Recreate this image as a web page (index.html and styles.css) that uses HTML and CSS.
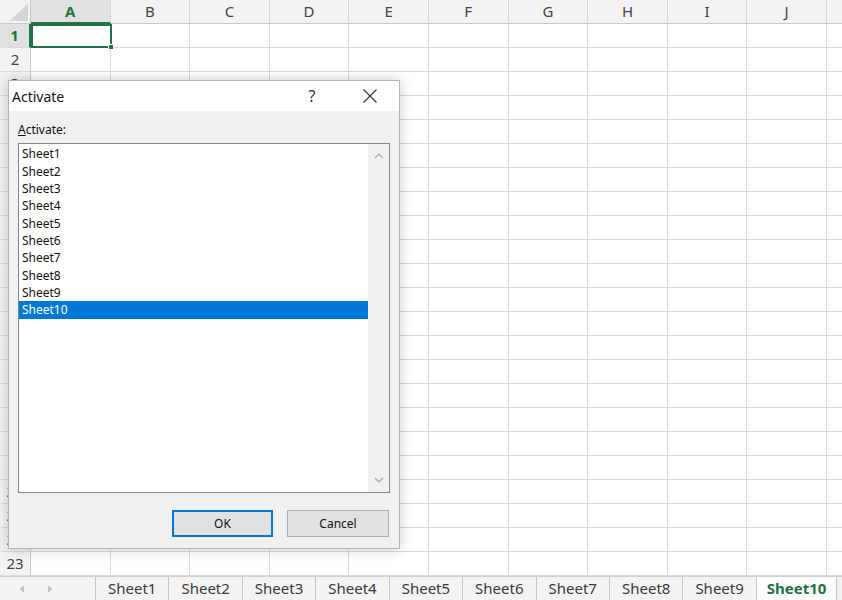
FILE: index.html
```html
<!DOCTYPE html>
<html>
<head>
<meta charset="utf-8">
<link rel="stylesheet" href="styles.css">
</head>
<body>
<div class="app">
  <div class="sheet">
    <div class="corner"><span class="tri"></span></div>
    <div class="colheads">
      <div class="ch sel">A</div>
      <div class="ch">B</div>
      <div class="ch">C</div>
      <div class="ch">D</div>
      <div class="ch">E</div>
      <div class="ch">F</div>
      <div class="ch">G</div>
      <div class="ch">H</div>
      <div class="ch">I</div>
      <div class="ch">J</div>
      <div class="ch"></div>
    </div>
    <div class="rowheads">
      <div class="rh sel">1</div>
      <div class="rh">2</div>
      <div class="rh">3</div>
      <div class="rh">4</div>
      <div class="rh">5</div>
      <div class="rh">6</div>
      <div class="rh">7</div>
      <div class="rh">8</div>
      <div class="rh">9</div>
      <div class="rh">10</div>
      <div class="rh">11</div>
      <div class="rh">12</div>
      <div class="rh">13</div>
      <div class="rh">14</div>
      <div class="rh">15</div>
      <div class="rh">16</div>
      <div class="rh">17</div>
      <div class="rh">18</div>
      <div class="rh">19</div>
      <div class="rh">20</div>
      <div class="rh">21</div>
      <div class="rh">22</div>
      <div class="rh">23</div>
    </div>
    <div class="cells">
      <div class="cursor"><span class="handle"></span></div>
    </div>
  </div>
  <div class="tabbar">
    <div class="nav">
      <svg class="arrow" width="6" height="10" viewBox="0 0 6 10"><path d="M5 1 L1 5 L5 9 Z" fill="#c3c3c3"/></svg>
      <svg class="arrow" width="6" height="10" viewBox="0 0 6 10"><path d="M1 1 L5 5 L1 9 Z" fill="#c3c3c3"/></svg>
    </div>
    <div class="tab">Sheet1</div>
    <div class="tab">Sheet2</div>
    <div class="tab">Sheet3</div>
    <div class="tab">Sheet4</div>
    <div class="tab">Sheet5</div>
    <div class="tab">Sheet6</div>
    <div class="tab">Sheet7</div>
    <div class="tab">Sheet8</div>
    <div class="tab">Sheet9</div>
    <div class="tab active">Sheet10</div>
  </div>

  <div class="dialog">
    <div class="titlebar">
      <div class="title">Activate</div>
      <div class="tbtns">
        <span class="help">?</span>
        <span class="close">
          <svg width="14" height="14" viewBox="0 0 14 14"><path d="M0.5 0.5 L13.5 13.5 M13.5 0.5 L0.5 13.5" stroke="#333" stroke-width="1.1" fill="none"/></svg>
        </span>
      </div>
    </div>
    <div class="dbody">
      <div class="label"><u>A</u>ctivate:</div>
      <div class="listbox">
        <div class="items">
          <div class="item">Sheet1</div>
          <div class="item">Sheet2</div>
          <div class="item">Sheet3</div>
          <div class="item">Sheet4</div>
          <div class="item">Sheet5</div>
          <div class="item">Sheet6</div>
          <div class="item">Sheet7</div>
          <div class="item">Sheet8</div>
          <div class="item">Sheet9</div>
          <div class="item selected">Sheet10</div>
        </div>
        <div class="vscroll">
          <svg width="10" height="6" viewBox="0 0 10 6"><path d="M1 5 L5 1 L9 5" stroke="#a6a6a6" stroke-width="1.2" fill="none"/></svg>
          <svg width="10" height="6" viewBox="0 0 10 6"><path d="M1 1 L5 5 L9 1" stroke="#a6a6a6" stroke-width="1.2" fill="none"/></svg>
        </div>
      </div>
      <div class="buttons">
        <div class="btn default">OK</div>
        <div class="btn">Cancel</div>
      </div>
    </div>
  </div>
</div>
</body>
</html>
```

FILE: styles.css
```css
* { box-sizing: border-box; }
html, body { margin: 0; padding: 0; }
body { font-family: "Noto Sans", "Liberation Sans", sans-serif; background: #fff; }

.app {
  position: relative;
  width: 842px;
  height: 600px;
  overflow: hidden;
  display: flex;
  flex-direction: column;
}

.sheet {
  display: grid;
  grid-template-columns: 31px 1fr;
  grid-template-rows: 24px 552px;
  height: 576px;
}

.corner {
  position: relative;
  background: #f3f3f3;
  border-right: 1px solid #c9c9c9;
  border-bottom: 1px solid #c9c9c9;
}
.corner .tri {
  position: absolute;
  right: 2px;
  bottom: 2px;
  width: 0;
  height: 0;
  border-left: 18px solid transparent;
  border-bottom: 18px solid #d6d6d6;
}

.colheads {
  display: flex;
  background: #f3f3f3;
}
.ch {
  flex: none;
  width: 79.6px;
  height: 24px;
  border-right: 1px solid #d6d6d6;
  border-bottom: 1px solid #c9c9c9;
  font-size: 15px;
  line-height: 23px;
  text-align: center;
  color: #444;
}
.ch.sel {
  background: #e1e1e1;
  color: #217346;
  font-weight: bold;
  border-bottom: 2px solid #217346;
}

.rowheads {
  display: flex;
  flex-direction: column;
  background: #f3f3f3;
}
.rh {
  flex: none;
  height: 24px;
  border-right: 1px solid #c9c9c9;
  border-bottom: 1px solid #dcdcdc;
  font-size: 15px;
  line-height: 23px;
  text-align: center;
  color: #444;
}
.rh.sel {
  background: #e1e1e1;
  color: #217346;
  font-weight: bold;
  border-right: 2px solid #217346;
}

.cells {
  position: relative;
  background-color: #fff;
  background-image:
    repeating-linear-gradient(to right, transparent 0 78.6px, #dadada 78.6px 79.6px),
    repeating-linear-gradient(to bottom, transparent 0 23px, #dadada 23px 24px);
}
.cursor {
  position: absolute;
  left: 0;
  top: 0;
  width: 81px;
  height: 24px;
  border: 2px solid #217346;
}
.handle {
  position: absolute;
  right: -4px;
  bottom: -4px;
  width: 6px;
  height: 6px;
  background: #217346;
  border: 1px solid #fff;
}

.tabbar {
  height: 24px;
  display: flex;
  align-items: stretch;
  background: #f3f3f3;
  border-top: 1px solid #d0d0d0;
}
.nav {
  width: 95px;
  flex: none;
  display: flex;
  align-items: center;
  padding-left: 19px;
  gap: 22px;
}
.tab {
  flex: none;
  padding: 0 12px;
  border-left: 1px solid #c6c6c6;
  font-size: 15px;
  line-height: 22px;
  color: #3a3a3a;
}
.tab.active {
  background: #fff;
  color: #217346;
  font-weight: bold;
  padding: 0 10px;
  border-right: 1px solid #c6c6c6;
}

/* dialog */
.dialog {
  position: absolute;
  left: 8px;
  top: 80px;
  width: 392px;
  height: 469px;
  background: #f0f0f0;
  border: 1px solid #b5b5b5;
  box-shadow: 0 0 12px rgba(0,0,0,0.22);
  display: flex;
  flex-direction: column;
}
.titlebar {
  height: 30px;
  flex: none;
  background: #fff;
  display: flex;
  align-items: center;
  justify-content: space-between;
}
.title {
  padding-left: 3px;
  font-size: 14px;
  color: #111;
}
.tbtns {
  display: flex;
  align-items: center;
  gap: 12px;
  padding-right: 6px;
}
.help {
  width: 46px;
  text-align: center;
  font-size: 16px;
  color: #333;
}
.close {
  width: 46px;
  display: flex;
  justify-content: center;
}
.dbody {
  flex: 1;
  padding: 11px 9px 0 9px;
  display: flex;
  flex-direction: column;
}
.label {
  font-size: 12px;
  line-height: 16px;
  color: #111;
  margin-bottom: 5px;
}
.listbox {
  height: 350px;
  background: #fff;
  border: 1px solid #828790;
  display: flex;
}
.items {
  flex: 1;
  padding-top: 1.3px;
}
.item {
  height: 17.33px;
  line-height: 17.33px;
  font-size: 12px;
  padding-left: 3px;
  color: #111;
}
.item.selected {
  background: #0078d7;
  color: #fff;
}
.vscroll {
  width: 21px;
  flex: none;
  background: #f0f0f0;
  display: flex;
  flex-direction: column;
  align-items: center;
  justify-content: space-between;
  padding: 9px 0 9px 0;
}
.buttons {
  display: flex;
  justify-content: flex-end;
  gap: 14px;
  margin-top: 17px;
  padding-right: 1px;
}
.btn {
  width: 102px;
  height: 27px;
  background: #e1e1e1;
  border: 1px solid #adadad;
  font-size: 12px;
  line-height: 25px;
  text-align: center;
  color: #111;
}
.btn.default {
  width: 101px;
  border: 2px solid #0078d7;
  line-height: 23px;
}
```
